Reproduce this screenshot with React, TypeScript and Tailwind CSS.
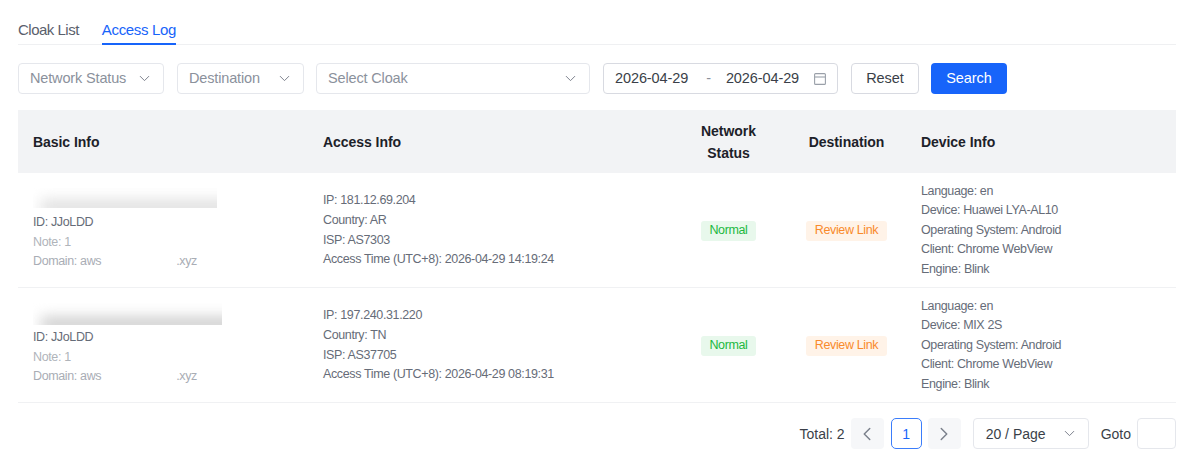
import { ChevronDown, ChevronLeft, ChevronRight } from 'lucide-react';

const rows = [
	{
		blur: 'w-[184px] h-[20px] mb-[5px]',
		shade: 'bg-[#dedede]',
		ip: '181.12.69.204',
		country: 'AR',
		isp: 'AS7303',
		time: '2026-04-29 14:19:24',
		device: 'Huawei LYA-AL10',
	},
	{
		blur: 'w-[189px] h-[22px] mb-[3px]',
		shade: 'bg-[#cccccc]',
		ip: '197.240.31.220',
		country: 'TN',
		isp: 'AS37705',
		time: '2026-04-29 08:19:31',
		device: 'MIX 2S',
	},
];

const gridCols = 'grid grid-cols-[290px_362px_117px_119px_1fr]';

function Select({ label, width }: { label: string; width: string }) {
	return (
		<div
			className={`${width} h-[31px] flex items-center justify-between pl-[11px] pr-[10px] border border-[#e5e7ec] rounded-[4px] text-[14.5px] tracking-[-0.15px] text-[#8b919c]`}
		>
			<span className="pt-[1px]">{label}</span>
			<ChevronDown className="w-[17px] h-[17px] text-[#7b818c]" strokeWidth={1.4} />
		</div>
	);
}

function Row({ row }: { row: (typeof rows)[number] }) {
	return (
		<div className={`${gridCols} h-[115px] pt-[1px] border-b border-[#f0f1f3] text-[12.5px] tracking-[-0.37px] leading-[19.6px] text-[#666c78]`}>
			<div className="pl-[15px] pt-[14px]">
				<div className={`${row.blur} flex items-end overflow-hidden`}>
					<div className={`w-[200px] h-[14px] -mb-[6px] ml-[8px] shrink-0 ${row.shade} blur-[7px]`} />
				</div>
				<div>ID: JJoLDD</div>
				<div className="text-[#b0b4ba]">Note: 1</div>
				<div className="text-[#a9adb5] flex">
					<span>Domain: aws</span>
					<span className="w-[75px]" />
					<span>.xyz</span>
				</div>
			</div>
			<div className="pl-[15px] self-center">
				<div>IP: {row.ip}</div>
				<div>Country: {row.country}</div>
				<div>ISP: {row.isp}</div>
				<div>Access Time (UTC+8): {row.time}</div>
			</div>
			<div className="flex items-center justify-center">
				<span className="h-[20px] px-[8.5px] flex items-center rounded-[3px] bg-[#e8f8ec] text-[#22b83f]">Normal</span>
			</div>
			<div className="flex items-center justify-center">
				<span className="h-[20px] px-[9px] flex items-center rounded-[3px] bg-[#fff3e8] text-[#f98a2b]">Review Link</span>
			</div>
			<div className="pl-[15px] self-center">
				<div>Language: en</div>
				<div>Device: {row.device}</div>
				<div>Operating System: Android</div>
				<div>Client: Chrome WebView</div>
				<div>Engine: Blink</div>
			</div>
		</div>
	);
}

export default function App() {
	return (
		<div className="w-[1200px] h-[468px] bg-white pl-[18px] pr-[24px] pt-[18px] font-['Liberation_Sans',sans-serif] overflow-hidden">
			<div className="flex gap-[23px] h-[27px] border-b border-[#eff0f2] text-[15px] leading-[23px]">
				<div className="text-[#5a606c] tracking-[-0.5px]">Cloak List</div>
				<div className="h-[27px] text-[#1764fa] tracking-[-0.35px] border-b-2 border-[#1764fa]">Access Log</div>
			</div>

			<div className="flex mt-[18px] items-center">
				<Select label="Network Status" width="w-[146px]" />
				<div className="ml-[13px]">
					<Select label="Destination" width="w-[127px]" />
				</div>
				<div className="ml-[12px]">
					<Select label="Select Cloak" width="w-[274px]" />
				</div>
				<div className="w-[235px] h-[31px] ml-[13px] flex items-center pl-[11px] pr-[11px] border border-[#d8dae1] rounded-[4px] text-[14.5px] tracking-[-0.1px] text-[#3a3f48]">
					<span className="pt-[1px]">2026-04-29</span>
					<span className="ml-[18px] mr-[15px] text-[#8b919c]">-</span>
					<span className="pt-[1px]">2026-04-29</span>
					<svg className="ml-auto w-[12px] h-[12px] text-[#9aa0a9]" viewBox="0 0 12 12" fill="none" stroke="currentColor" strokeWidth="1.1">
						<rect x="0.6" y="0.6" width="10.8" height="10.8" rx="1" />
						<path d="M0.6 4h10.8" />
					</svg>
				</div>
				<div className="w-[68px] h-[31px] ml-[13px] pt-[1px] flex items-center justify-center border border-[#d8dae1] rounded-[4px] text-[14.5px] tracking-[-0.05px] text-[#3a3f48]">
					Reset
				</div>
				<div className="w-[76px] h-[31px] ml-[12px] pt-[1px] flex items-center justify-center rounded-[4px] bg-[#1764fa] text-[14.5px] tracking-[-0.05px] text-white">
					Search
				</div>
			</div>

			<div className="mt-[16px]">
				<div className={`${gridCols} h-[63px] pt-[1px] bg-[#f2f3f5] items-center text-[14px] tracking-[-0.05px] leading-[22px] font-bold text-[#1d2129]`}>
					<div className="pl-[15px]">Basic Info</div>
					<div className="pl-[15px]">Access Info</div>
					<div className="text-center">
						Network
						<br />
						Status
					</div>
					<div className="text-center">Destination</div>
					<div className="pl-[15px]">Device Info</div>
				</div>
				{rows.map((row) => (
					<Row key={row.ip} row={row} />
				))}
			</div>

			<div className="flex items-center justify-end mt-[15px] text-[14px] text-[#3a3f48]">
				<span className="mr-[6px] pt-[1px]">Total: 2</span>
				<div className="w-[33px] h-[31px] flex items-center justify-center rounded-[4px] bg-[#f6f7f9] text-[#7b818c]">
					<ChevronLeft className="w-[22px] h-[22px]" strokeWidth={1.6} />
				</div>
				<div className="w-[31px] h-[31px] ml-[7px] pt-[1px] flex items-center justify-center rounded-[5px] border-[1.5px] border-[#3b7dfb] text-[#1764fa]">
					1
				</div>
				<div className="w-[33px] h-[31px] ml-[6px] flex items-center justify-center rounded-[4px] bg-[#f6f7f9] text-[#7b818c]">
					<ChevronRight className="w-[22px] h-[22px]" strokeWidth={1.6} />
				</div>
				<div className="w-[116px] h-[31px] ml-[12px] flex items-center justify-between pl-3 pr-[10px] border border-[#e5e7ec] rounded-[4px]">
					<span className="pt-[1px]">20 / Page</span>
					<ChevronDown className="w-[17px] h-[17px] text-[#7b818c]" strokeWidth={1.4} />
				</div>
				<span className="ml-[12px] mr-[6px] pt-[1px]">Goto</span>
				<div className="w-[39px] h-[31px] border border-[#e5e7ec] rounded-[4px]" />
			</div>
		</div>
	);
}
